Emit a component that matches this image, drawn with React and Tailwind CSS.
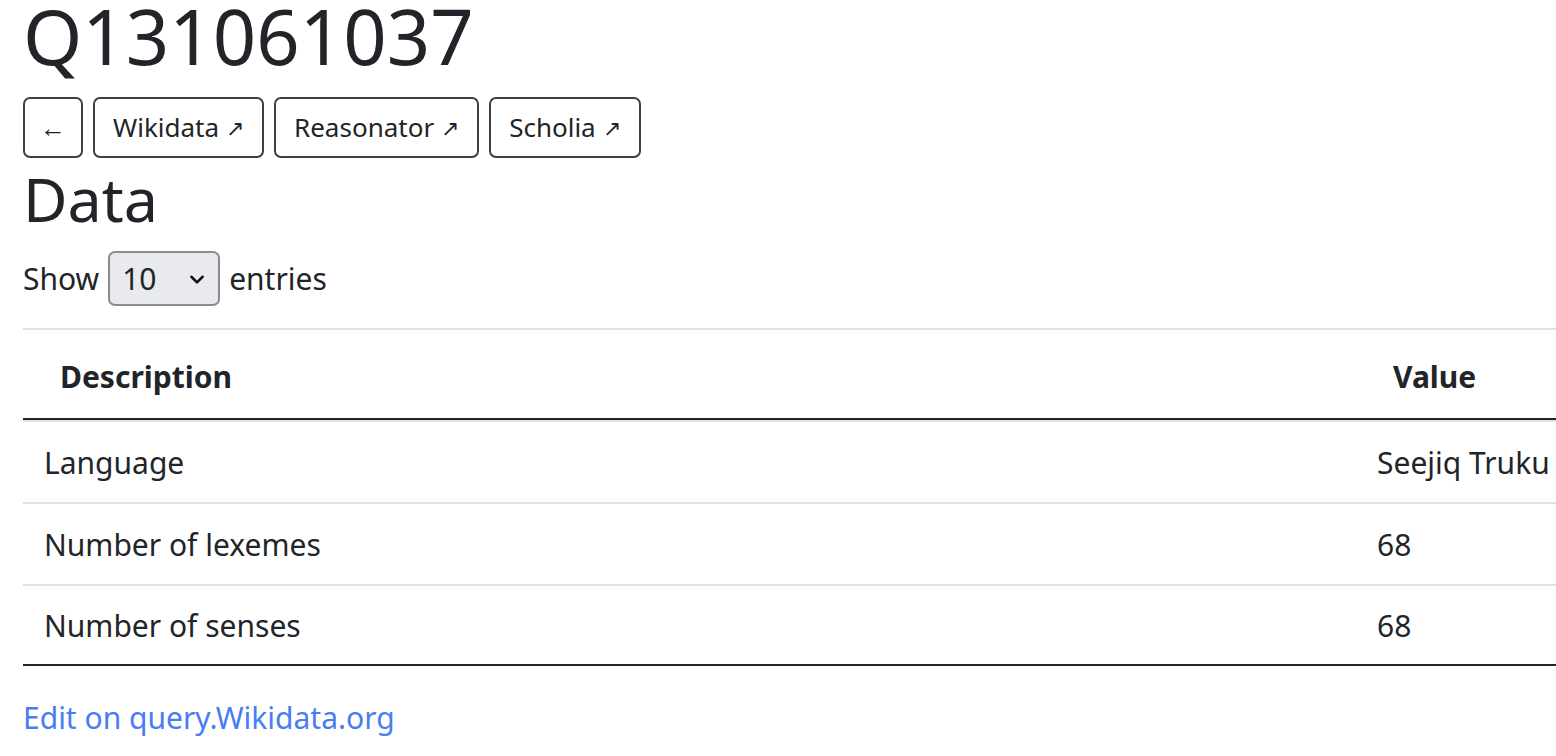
import React from 'react';

const rows = [
  ['Language', 'Seejiq Truku'],
  ['Number of lexemes', '68'],
  ['Number of senses', '68'],
];

const links = ['Wikidata', 'Reasonator', 'Scholia'];

export default function App() {
  return (
    <div className="min-h-screen bg-white pl-[23px] text-[#212529] font-['Segoe_UI','Noto_Sans',sans-serif] overflow-hidden">
      <h1 className="text-[76px] leading-[71px] font-normal mb-[26px]">Q131061037</h1>

      {/* ═══ Link buttons ═══ */}
      <div className="flex gap-[10px]">
        <button className="h-[61px] w-[60px] rounded-[7px] border-2 border-[#3d3f42] text-[26px] flex items-center justify-center">←</button>
        {links.map(l => (
          <button key={l} className="h-[61px] px-[18px] rounded-[7px] border-2 border-[#3d3f42] text-[26px] flex items-center gap-[7px]">
            {l}<span className="text-[22px]">↗</span>
          </button>
        ))}
      </div>

      <h2 className="text-[61px] leading-[74px] font-normal mt-[4px] mb-[15px]">Data</h2>

      <div className="flex items-center gap-[9px] text-[30px]">
        <span>Show</span>
        <div className="h-[55px] w-[112px] rounded-[7px] border-2 border-[#8b8b94] bg-[#e9eaed] flex items-center justify-between pl-[12px] pr-[12px]">
          <span>10</span>
          <svg width="18" height="18" viewBox="0 0 16 16" fill="none" stroke="#111" strokeWidth="2.2" strokeLinecap="round" strokeLinejoin="round"><path d="M3 6l5 5 5-5" /></svg>
        </div>
        <span>entries</span>
      </div>

      {/* ═══ Table ═══ */}
      <div className="mt-[22px] w-[1540px] text-[30px]">
        <div className="border-t-2 border-[#dee2e6] grid grid-cols-[1fr_207px] h-[92px] pt-[4px] items-center font-bold border-b-[2px] border-b-[#212529]">
          <div className="pl-[37px]">Description</div>
          <div className="pl-[37px]">Value</div>
        </div>
        {rows.map(([d, v], i) => (
          <div key={d} className={`grid grid-cols-[1fr_207px] h-[82px] items-center border-t-2 border-[#dee2e6] ${i === rows.length - 1 ? 'border-b-2 border-b-[#212529]' : ''}`}>
            <div className="pl-[21px]">{d}</div>
            <div className="pl-[21px]">{v}</div>
          </div>
        ))}
      </div>

      <a href="#" className="block mt-[29px] text-[30px] leading-[45px] text-[#4a7cf3]">Edit on query.Wikidata.org</a>
    </div>
  );
}
